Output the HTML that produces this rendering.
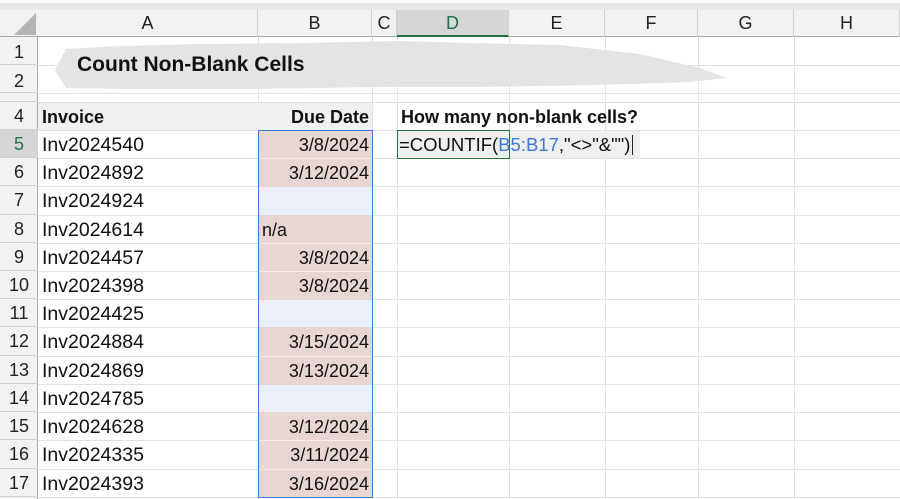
<!DOCTYPE html>
<html><head><meta charset="utf-8"><style>
*{margin:0;padding:0;box-sizing:border-box}
body{width:900px;height:499px;overflow:hidden;background:#fff;font-family:"Liberation Sans",sans-serif;position:relative;color:#111}
.a{position:absolute}
.vl{position:absolute;top:37px;bottom:0;width:1px;background:#e1e1e1}
.hl{position:absolute;left:38px;right:0;height:1px;background:#e1e1e1}
.ch{position:absolute;top:10px;height:27px;font-size:18px;line-height:27px;text-align:center;color:#222;border-right:1px solid #d0d0d0}
.rh{position:absolute;left:0;width:38px;font-size:18px;text-align:center;color:#222;border-bottom:1px solid #d0d0d0}
.c{position:absolute;font-size:18px;line-height:28px;height:28px}
.i{font-size:19.5px}
</style></head><body>
<div class="a" style="left:0;top:0;width:900px;height:3px;background:#fafafa"></div>
<div class="a" style="left:0;top:3px;width:900px;height:7px;background:#e8e8e8"></div>
<div class="a" style="left:0;top:10px;width:900px;height:27px;background:#f2f2f2;border-bottom:1px solid #a8a8a8"></div>
<div class="a" style="left:0;top:37px;width:38px;height:462px;background:#f2f2f2;border-right:1px solid #a8a8a8"></div>
<svg class="a" style="left:14px;top:13px" width="23" height="23"><polygon points="22,0 22,22 0,22" fill="#b4b4b4"/></svg>
<div class="ch" style="left:38px;width:220px">A</div>
<div class="ch" style="left:258px;width:114px">B</div>
<div class="ch" style="left:372px;width:25px">C</div>
<div class="ch" style="left:397px;width:112px;background:#d6d6d6;color:#217346;border-bottom:2px solid #217346">D</div>
<div class="ch" style="left:509px;width:96px">E</div>
<div class="ch" style="left:605px;width:93px">F</div>
<div class="ch" style="left:698px;width:96px">G</div>
<div class="ch" style="left:794px;width:106px">H</div>
<div class="vl" style="left:258px"></div><div class="vl" style="left:372px"></div><div class="vl" style="left:397px"></div>
<div class="vl" style="left:509px"></div><div class="vl" style="left:605px"></div><div class="vl" style="left:698px"></div><div class="vl" style="left:794px"></div>
<div class="hl" style="top:65px"></div><div class="hl" style="top:93px"></div><div class="hl" style="top:102px"></div>
<div class="hl" style="top:130px"></div><div class="hl" style="top:158px"></div><div class="hl" style="top:186px"></div><div class="hl" style="top:215px"></div>
<div class="hl" style="top:243px"></div><div class="hl" style="top:271px"></div><div class="hl" style="top:299px"></div><div class="hl" style="top:327px"></div>
<div class="hl" style="top:356px"></div><div class="hl" style="top:384px"></div><div class="hl" style="top:412px"></div><div class="hl" style="top:440px"></div>
<div class="hl" style="top:469px"></div><div class="hl" style="top:497px"></div>
<div class="a" style="left:38px;top:103px;width:334px;height:27px;background:#f0f0f0"></div>
<div class="a" style="left:397px;top:131px;width:243px;height:27px;background:#efefef"></div>
<div class="a" style="left:258px;top:130px;width:114px;height:367px;background:#e8d6d3"></div>
<div class="a" style="left:258px;top:187px;width:114px;height:28px;background:#eaeff8"></div>
<div class="a" style="left:258px;top:300px;width:114px;height:27px;background:#eaeff8"></div>
<div class="a" style="left:258px;top:385px;width:114px;height:27px;background:#eaeff8"></div>
<div class="hl" style="left:258px;width:114px;top:158px;background:#f4eceb"></div><div class="hl" style="left:258px;width:114px;top:243px;background:#f4eceb"></div>
<div class="hl" style="left:258px;width:114px;top:271px;background:#f4eceb"></div><div class="hl" style="left:258px;width:114px;top:356px;background:#f4eceb"></div>
<div class="hl" style="left:258px;width:114px;top:440px;background:#f4eceb"></div><div class="hl" style="left:258px;width:114px;top:469px;background:#f4eceb"></div>
<div class="a" style="left:258px;top:130px;width:115px;height:368px;border:1.5px solid #3c78d8"></div>
<svg class="a" style="left:0;top:0" width="900" height="110"><path d="M55,70 L66,49 L120,46 L200,44 L300,43 L400,41 L470,43 L560,45 L640,54 L700,68 L727,78 L690,82 L600,85 L480,87 L380,87 L250,89 L120,89 L66,88 Z" fill="#e4e4e4"/></svg>
<div class="a" style="left:77px;top:53px;font-size:21px;font-weight:bold">Count Non-Blank Cells</div>
<div class="rh" style="top:37px;height:28px;line-height:30px">1</div>
<div class="rh" style="top:65px;height:28px;line-height:32px">2</div>
<div class="rh" style="top:93px;height:9px"></div>
<div class="rh" style="top:102px;height:28px;line-height:28px">4</div>
<div class="rh" style="top:130px;height:28px;line-height:28px;background:#d6d6d6;color:#217346">5</div>
<div class="rh" style="top:158px;height:28px;line-height:28px">6</div>
<div class="rh" style="top:186px;height:29px;line-height:29px">7</div>
<div class="rh" style="top:215px;height:28px;line-height:28px">8</div>
<div class="rh" style="top:243px;height:28px;line-height:28px">9</div>
<div class="rh" style="top:271px;height:28px;line-height:28px">10</div>
<div class="rh" style="top:299px;height:28px;line-height:28px">11</div>
<div class="rh" style="top:327px;height:29px;line-height:29px">12</div>
<div class="rh" style="top:356px;height:28px;line-height:28px">13</div>
<div class="rh" style="top:384px;height:28px;line-height:28px">14</div>
<div class="rh" style="top:412px;height:28px;line-height:28px">15</div>
<div class="rh" style="top:440px;height:29px;line-height:29px">16</div>
<div class="rh" style="top:469px;height:28px;line-height:28px">17</div>
<div class="c" style="left:42px;top:103px;font-weight:bold">Invoice</div>
<div class="c" style="left:258px;width:111px;text-align:right;top:103px;font-weight:bold">Due Date</div>
<div class="c" style="left:401px;top:103px;font-weight:bold">How many non-blank cells?</div>
<div class="a" style="left:397px;top:130px;width:113px;height:29px;border:1.5px solid #217346"></div>
<div class="c" style="left:399px;top:131px;font-size:18.5px;line-height:27px;white-space:nowrap">=COUNTIF(<span style="color:#3c78d8">B5:B17</span>,"&lt;&gt;"&amp;"")<span style="display:inline-block;width:1px;height:20px;background:#222;vertical-align:-4px;margin-left:2px"></span></div>
<div class="c i" style="left:42px;top:131px">Inv2024540</div>
<div class="c i" style="left:42px;top:159px">Inv2024892</div>
<div class="c i" style="left:42px;top:187px">Inv2024924</div>
<div class="c i" style="left:42px;top:216px">Inv2024614</div>
<div class="c i" style="left:42px;top:244px">Inv2024457</div>
<div class="c i" style="left:42px;top:272px">Inv2024398</div>
<div class="c i" style="left:42px;top:300px">Inv2024425</div>
<div class="c i" style="left:42px;top:328px">Inv2024884</div>
<div class="c i" style="left:42px;top:357px">Inv2024869</div>
<div class="c i" style="left:42px;top:385px">Inv2024785</div>
<div class="c i" style="left:42px;top:413px">Inv2024628</div>
<div class="c i" style="left:42px;top:441px">Inv2024335</div>
<div class="c i" style="left:42px;top:470px">Inv2024393</div>
<div class="c" style="left:258px;width:111px;text-align:right;top:131px">3/8/2024</div>
<div class="c" style="left:258px;width:111px;text-align:right;top:159px">3/12/2024</div>
<div class="c" style="left:262px;top:216px">n/a</div>
<div class="c" style="left:258px;width:111px;text-align:right;top:244px">3/8/2024</div>
<div class="c" style="left:258px;width:111px;text-align:right;top:272px">3/8/2024</div>
<div class="c" style="left:258px;width:111px;text-align:right;top:328px">3/15/2024</div>
<div class="c" style="left:258px;width:111px;text-align:right;top:357px">3/13/2024</div>
<div class="c" style="left:258px;width:111px;text-align:right;top:413px">3/12/2024</div>
<div class="c" style="left:258px;width:111px;text-align:right;top:441px">3/11/2024</div>
<div class="c" style="left:258px;width:111px;text-align:right;top:470px">3/16/2024</div>
</body></html>
